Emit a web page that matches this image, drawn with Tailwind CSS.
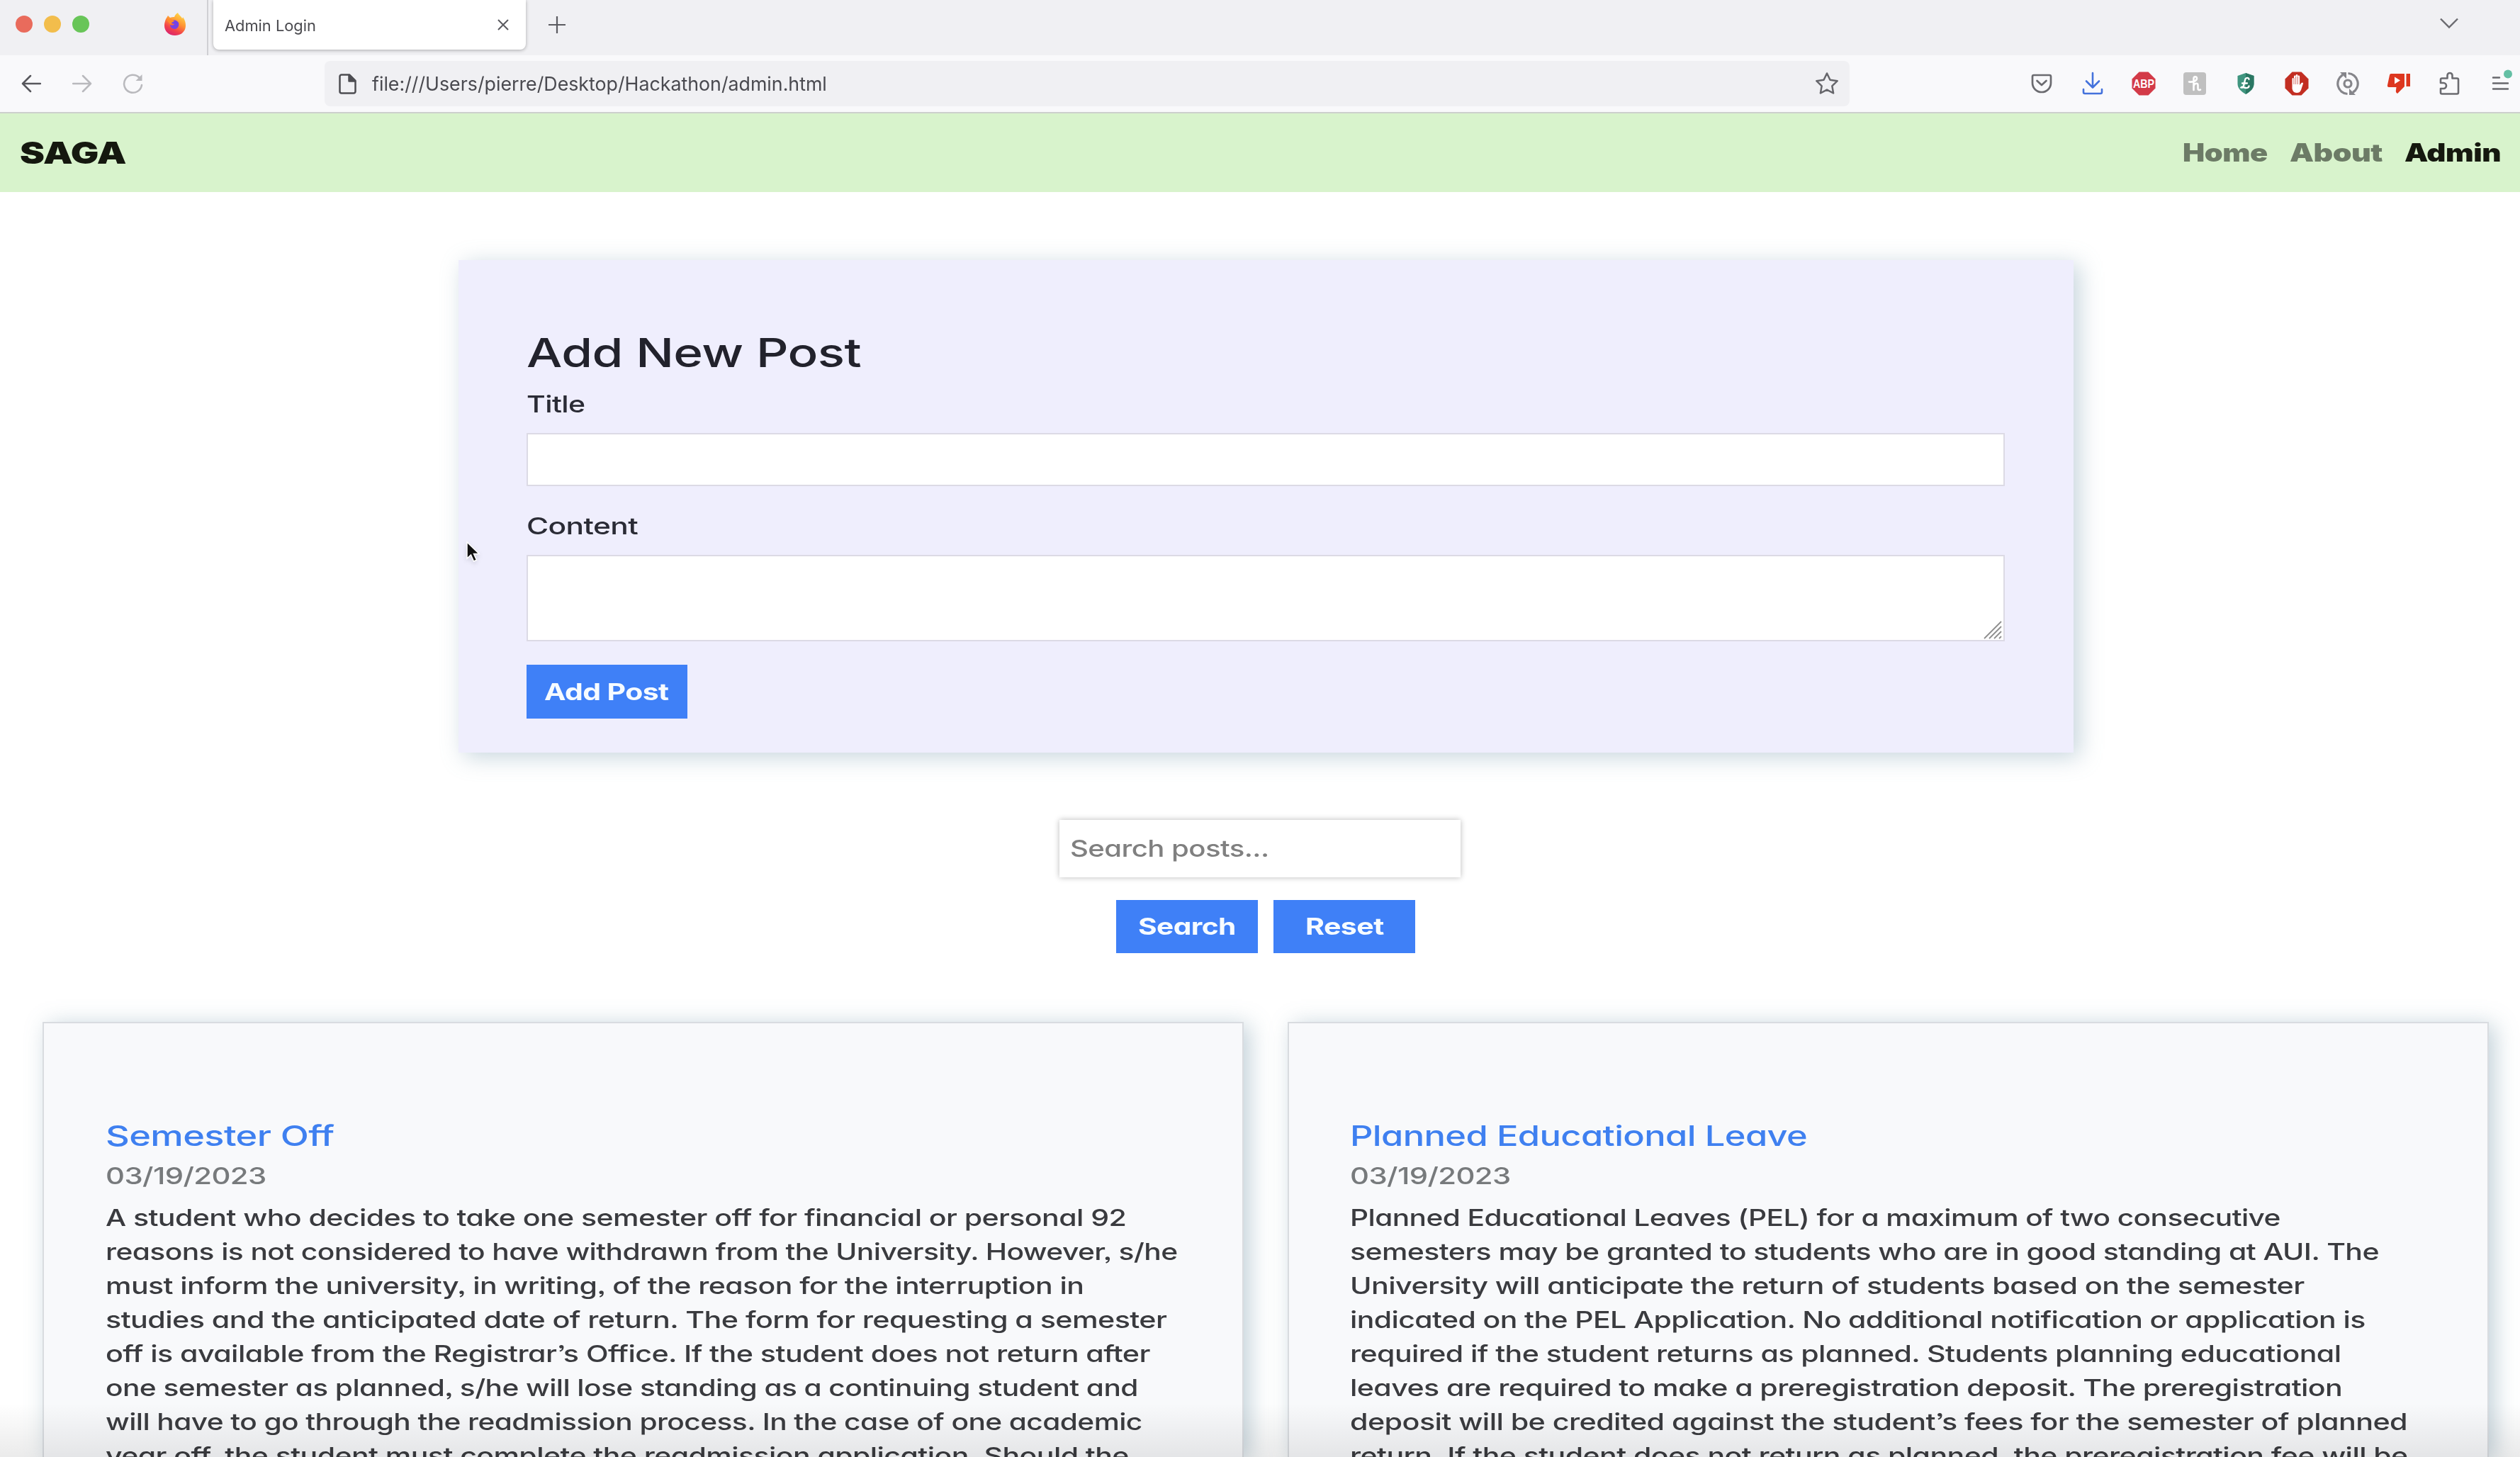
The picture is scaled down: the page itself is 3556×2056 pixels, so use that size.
<!DOCTYPE html>
<html lang="en">
<head>
  <meta charset="UTF-8">
  <meta name="viewport" content="width=device-width, initial-scale=1.0">
  <title>Admin Login</title>
  <script src="https://cdn.jsdelivr.net/npm/@tailwindcss/browser@4"></script>
</head>
<body class="relative h-[2056px] w-[3556px] overflow-hidden bg-white font-['Inter','Liberation_Sans',sans-serif]">

  <!-- Tab bar -->
  <div class="flex h-[78px] items-start bg-[#f0f0f3]">
    <div class="flex h-[68px] items-center gap-4 pl-[22px]">
      <span class="size-6 rounded-full bg-[#e96b5c]"></span>
      <span class="size-6 rounded-full bg-[#f2bd4c]"></span>
      <span class="size-6 rounded-full bg-[#68c558]"></span>
    </div>
    <svg class="mt-[18px] ml-[105px] size-8" viewBox="0 0 32 32">
      <defs>
        <linearGradient id="fox" x1="0.8" y1="0" x2="0.3" y2="1">
          <stop offset="0" stop-color="#ffe14a"/>
          <stop offset="0.45" stop-color="#ff9132"/>
          <stop offset="0.75" stop-color="#f2404b"/>
          <stop offset="1" stop-color="#d92470"/>
        </linearGradient>
      </defs>
      <path d="M3 9c1-2 2-3 3-5 1 1 2 2 3 3 2-1 4-1 6-1 1-3 3-5 5-6 1 3 5 5 6 8 1-1 1-1 1-2 3 4 4 8 4 12 0 8-6 14-15 14S1 26 1 18c0-4 1-6 2-9z" fill="url(#fox)"/>
      <path d="M11 11c4-2 8 0 10 3 1 3 0 8-5 9-4 0-7-3-7-6 2 1 5 1 6-1-2 0-4-1-5-3z" fill="#7543e5"/>
      <path d="M4 10c3-2 6-1 8 0l3 1c-1 2-3 2-4 3-1 1 0 2-1 3" fill="#ff8a2b"/>
    </svg>
    <div class="ml-[29px] h-[78px] w-[2px] bg-[#cfcfd3]"></div>
    <div class="ml-[7px] flex h-[70px] w-[441px] items-center justify-between rounded-b-lg bg-white pr-[24px] pl-[16px] shadow-[0_1px_5px_rgba(0,0,0,0.3)]">
      <span data-w="129" class="inline-block origin-left pt-[2px] text-[21.5px] leading-[70px] whitespace-nowrap text-[#4a4a4f]">Admin Login</span>
      <svg class="size-4" viewBox="0 0 16 16" fill="none" stroke="#5b5b60" stroke-width="2"><path d="M1 1l14 14M15 1L1 15"/></svg>
    </div>
    <svg class="mt-[23px] ml-[32px] size-6" viewBox="0 0 24 24" fill="none" stroke="#5b5b60" stroke-width="2.2"><path d="M12 0v24M0 12h24"/></svg>
    <svg class="mt-[25px] mr-[87px] ml-auto h-4 w-[26px]" viewBox="0 0 26 16" fill="none" stroke="#6a6a6f" stroke-width="2.4"><path d="M1 1.500l12 12 12-12"/></svg>
  </div>

  <!-- Toolbar -->
  <div class="flex h-[82px] items-center border-b-2 border-[#cdd0cd] bg-[#f9f9fb]">
    <svg class="ml-[30px] h-[26px] w-[28px]" viewBox="0 0 28 26" fill="none" stroke="#57575c" stroke-width="2.5" stroke-linecap="round" stroke-linejoin="round"><path d="M27 13H2M13 2L2 13l11 11"/></svg>
    <svg class="ml-[44px] h-[26px] w-[28px]" viewBox="0 0 28 26" fill="none" stroke="#b9b9bd" stroke-width="2.5" stroke-linecap="round" stroke-linejoin="round"><path d="M1 13h25M15 2l11 11-11 11"/></svg>
    <svg class="ml-[43px] size-[30px]" viewBox="0 0 30 30" fill="none" stroke="#b9b9bd" stroke-width="2.500" stroke-linecap="round"><path d="M27 17a12.500 12.500 0 1 1-3.500-10.500"/><path d="M27.500 2v9h-9z" fill="#b9b9bd" stroke="none"/></svg>
    <div class="ml-[255px] flex h-[64px] w-[2152px] shrink-0 items-center rounded-lg bg-[#f0f0f3] pr-[15px] pl-[20px]">
      <svg class="h-[29px] w-[25px]" viewBox="0 0 25 29" fill="none" stroke="#4d4d52" stroke-width="2.500" stroke-linejoin="round"><path d="M4 1.500h11l8.500 8.500v15a2.500 2.500 0 0 1-2.500 2.500H4A2.500 2.500 0 0 1 1.500 25V4A2.500 2.500 0 0 1 4 1.500z"/><path d="M14.500 2v8.500H23z" fill="#4d4d52"/></svg>
      <span data-w="642" class="ml-[22px] inline-block origin-left pt-[2px] text-[27px] leading-[62px] whitespace-nowrap text-[#4a4a50]">file:///Users/pierre/Desktop/Hackathon/admin.html</span>
      <svg class="ml-auto size-[34px]" viewBox="0 0 34 34" fill="none" stroke="#66666b" stroke-width="2.500" stroke-linejoin="round"><path d="M17 2.500l4.500 9.300 10.200 1.400-7.400 7.100 1.800 10.200-9.100-4.900-9.100 4.900 1.800-10.200-7.400-7.100 10.200-1.400z"/></svg>
    </div>

    <!-- Extension icons -->
    <div class="ml-[253px] flex shrink-0 gap-9">
      <svg class="size-9" viewBox="0 0 36 36" fill="none" stroke="#6b6b70" stroke-width="2.700" stroke-linecap="round" stroke-linejoin="round"><path d="M7 6h22a2 2 0 0 1 2 2v9a13 13 0 0 1-26 0V8a2 2 0 0 1 2-2z"/><path d="M11.500 14l6.500 6 6.500-6"/></svg>
      <svg class="size-9" viewBox="0 0 36 36" fill="none" stroke="#4472dc" stroke-width="2.600" stroke-linecap="round" stroke-linejoin="round"><path d="M18 3v20M9 14.500l9 9 9-9M5 26v4a2 2 0 0 0 2 2h22a2 2 0 0 0 2-2v-4"/></svg>
      <svg class="size-9" viewBox="0 0 36 36"><path d="M11.500 1.500h13l10 10v13l-10 10h-13l-10-10v-13z" fill="#d33b48"/><text x="18" y="24" text-anchor="middle" textLength="30" lengthAdjust="spacingAndGlyphs" font-family="Liberation Sans" font-weight="700" font-size="17" fill="#fff">ABP</text></svg>
      <svg class="size-9" viewBox="0 0 36 36" fill="none"><rect x="2" y="2" width="32" height="32" rx="4" fill="#c0c0c0"/><path d="M10 15.500c5 .5 11-1 11-5 0-3-4.500-3-4.500.5V27M16.500 21.500c1-4.500 6-5 6-1.500v5c0 2 1.500 2.500 3.500 1.500" stroke="#fff" stroke-width="2.600" stroke-linecap="round"/></svg>
      <svg class="size-9" viewBox="0 0 36 36" fill="none"><path d="M18 3l11.500 4v11c0 7-5 11-11.500 15C11.500 29 6.500 25 6.500 18V7z" fill="#3f957f"/><path d="M18 3l11.500 4v11c0 7-5 11-11.500 15z" fill="#2b7763"/><path d="M22.500 12c0-3-5-3-5.500 1l-2 8c-.5 2-2 3-3.500 2.500 2-2.500 5 1.500 8.500.5 1.500-.5 2.500-1.500 2.500-2.500M13 17.500h7" stroke="#fff" stroke-width="2.300" stroke-linecap="round"/></svg>
      <svg class="size-9" viewBox="0 0 36 36"><path d="M11.500 1.500h13l10 10v13l-10 10h-13l-10-10v-13z" fill="#c22e22"/><path d="M18 31c-4 0-6-3-6.500-6V11.500c0-2 2.500-2 2.500 0V8c0-2 2.700-2 2.700 0V6.500c0-2 2.700-2 2.700 0V8c0-2 2.700-2 2.700 0v12l2.500-3c1.300-1.300 3-.3 2.300 1.200L24 27c-1.500 3-3 4-6 4z" fill="#fff"/><path d="M14 10v9M16.700 8v11M19.400 8v11" stroke="#c22e22" stroke-width=".7"/></svg>
      <svg class="size-9" viewBox="0 0 36 36" fill="none" stroke="#85858a" stroke-width="3.200"><circle cx="18" cy="18" r="5"/><path d="M17.500 32.500A14.500 14.500 0 0 1 11 5.500M18.500 3.500A14.500 14.500 0 0 1 25 30.500"/><path d="M7 2h9v9zM29 34h-9v-9z" fill="#85858a" stroke="none"/></svg>
      <svg class="size-9" viewBox="0 0 36 36"><path d="M7 4h19v18l-10 10c-2-1-2.500-3-2-5l.5-4H4c-1.500 0-2.500-1-2-3L5 6c.3-1.300 1-2 2-2zM28.500 4H34v18h-5.500z" fill="#dd371f"/><path d="M12 8.500l8 5-8 5z" fill="#fff"/></svg>
      <svg class="size-9" viewBox="0 0 36 36" fill="none" stroke="#6b6b70" stroke-width="2.600" stroke-linejoin="round"><path d="M7 32.500a2 2 0 0 1-2-2V25h4a3.500 3.500 0 0 0 0-8H5v-4.500a2 2 0 0 1 2-2h7.500V6.500a3.500 3.500 0 0 1 7 0v4H28a2 2 0 0 1 2 2v18a2 2 0 0 1-2 2z"/></svg>
      <svg class="size-9 overflow-visible" viewBox="0 0 36 36" fill="none" stroke="#68686d" stroke-width="2.400" stroke-linecap="round"><path d="M7 9.500h9M7 17.500h21M7 25.500h21"/><circle cx="28" cy="4.500" r="6" fill="#64bfa4" stroke="none"/></svg>
    </div>
  </div>

  <!-- Site nav -->
  <nav class="flex h-[111px] items-center justify-between bg-[#d8f3cc] pr-[27px] pl-[28px] leading-[111px] font-black tracking-tight whitespace-nowrap text-[#15180f]">
    <span data-w="150" class="inline-block origin-left text-[42px]">SAGA</span>
    <div class="flex gap-[31px] text-[35px]">
      <a data-w="120" class="inline-block origin-left text-[#6c7b66]">Home</a>
      <a data-w="131" class="inline-block origin-left text-[#6c7b66]">About</a>
      <a data-w="136" class="inline-block origin-left">Admin</a>
    </div>
  </nav>

  <main class="tracking-[-0.03em] [font-feature-settings:'cv11','ss03']">
    <!-- New post form -->
    <section class="mt-[96px] ml-[647px] h-[695px] w-[2279px] bg-[#efeefd] px-[96px] pt-[97px] leading-[48px] whitespace-nowrap text-[#2a2b35] shadow-[8px_6px_30px_rgba(120,155,175,0.42)]">
      <h1 class="text-[56px] leading-[68px] font-medium text-[#22222c]"><span data-w="472" class="inline-block origin-left">Add New Post</span></h1>
      <div class="mt-[14px] text-[33px] font-medium"><span data-w="82" class="inline-block origin-left">Title</span></div>
      <div class="mt-[17px] h-[75px] w-[2086px] border-2 border-[#dcdae5] bg-white"></div>
      <div class="mt-[32px] text-[33px] font-medium"><span data-w="157" class="inline-block origin-left">Content</span></div>
      <div class="mt-[17px] flex h-[122px] w-[2086px] items-end justify-end border-2 border-[#dcdae5] bg-white">
        <svg class="mr-[2px] mb-px size-[26px]" viewBox="0 0 26 26" fill="none" stroke="#8e8e8e" stroke-width="1.800"><path d="M1 25L25 1M8 25L25 8M15 25l10-10M22 25l3-3"/></svg>
      </div>
      <div class="mt-[33px] flex h-[76px] w-[227px] items-center bg-[#3f80f7] pl-[25px] text-[33px] font-bold text-[#f6fbff]"><span data-w="175" class="inline-block origin-left">Add Post</span></div>
    </section>

    <!-- Search -->
    <section class="mt-[95px] leading-[81px] whitespace-nowrap">
      <div class="ml-[1495px] h-[81px] w-[566px] bg-white pl-[15px] text-[33px] font-medium text-[#808080] shadow-[0_0_8px_rgba(0,0,0,0.28)]"><span data-w="281" class="inline-block origin-left">Search posts...</span></div>
      <div class="mt-[32px] ml-[1575px] flex gap-[22px] text-[33px] leading-[75px] font-bold text-[#f6fbff]">
        <div class="flex h-[75px] w-[200px] justify-center bg-[#3f80f7]"><span data-w="138" class="inline-block origin-left">Search</span></div>
        <div class="flex h-[75px] w-[200px] justify-center bg-[#3f80f7]"><span data-w="111" class="inline-block origin-left">Reset</span></div>
      </div>
    </section>

    <!-- Posts -->
    <section class="mt-[97px] flex gap-[62px] pl-[60px] text-[33px] leading-[48px] font-medium whitespace-nowrap text-[#3a3b3f]">
      <article class="h-[614px] w-[1695px] overflow-hidden border-2 border-b-0 border-[#d9dce0] bg-[#f8f9fb] pt-[129px] pl-[87px] shadow-[8px_4px_30px_rgba(110,145,165,0.42)]">
        <h2 class="text-[40px] leading-[60px] font-medium text-[#3f80f0]"><span data-w="322" class="inline-block origin-left">Semester Off</span></h2>
        <div class="mt-[2px] text-[#777a7c]"><span data-w="227" class="inline-block origin-left">03/19/2023</span></div>
        <div class="mt-[11px] flex flex-col items-start">
          <span data-w="1440" class="origin-left">A student who decides to take one semester off for financial or personal 92</span>
          <span data-w="1513" class="origin-left">reasons is not considered to have withdrawn from the University. However, s/he</span>
          <span data-w="1380" class="origin-left">must inform the university, in writing, of the reason for the interruption in</span>
          <span data-w="1498" class="origin-left">studies and the anticipated date of return. The form for requesting a semester</span>
          <span data-w="1474" class="origin-left">off is available from the Registrar’s Office. If the student does not return after</span>
          <span data-w="1457" class="origin-left">one semester as planned, s/he will lose standing as a continuing student and</span>
          <span data-w="1463" class="origin-left">will have to go through the readmission process. In the case of one academic</span>
          <span data-w="1444" class="origin-left">year off, the student must complete the readmission application. Should the</span>
        </div>
      </article>
      <article class="h-[614px] w-[1695px] overflow-hidden border-2 border-b-0 border-[#d9dce0] bg-[#f8f9fb] pt-[129px] pl-[86px] shadow-[8px_4px_30px_rgba(110,145,165,0.42)]">
        <h2 class="text-[40px] leading-[60px] font-medium text-[#3f80f0]"><span data-w="645" class="inline-block origin-left">Planned Educational Leave</span></h2>
        <div class="mt-[2px] text-[#777a7c]"><span data-w="227" class="inline-block origin-left">03/19/2023</span></div>
        <div class="mt-[11px] flex flex-col items-start">
          <span data-w="1313" class="origin-left">Planned Educational Leaves (PEL) for a maximum of two consecutive</span>
          <span data-w="1452" class="origin-left">semesters may be granted to students who are in good standing at AUI. The</span>
          <span data-w="1347" class="origin-left">University will anticipate the return of students based on the semester</span>
          <span data-w="1433" class="origin-left">indicated on the PEL Application. No additional notification or application is</span>
          <span data-w="1398" class="origin-left">required if the student returns as planned. Students planning educational</span>
          <span data-w="1400" class="origin-left">leaves are required to make a preregistration deposit. The preregistration</span>
          <span data-w="1492" class="origin-left">deposit will be credited against the student’s fees for the semester of planned</span>
          <span data-w="1493" class="origin-left">return. If the student does not return as planned, the preregistration fee will be</span>
        </div>
      </article>
    </section>
  </main>

  <!-- Fade along the bottom edge -->
  <div class="absolute inset-x-0 bottom-0 h-[76px] bg-gradient-to-b from-black/0 to-black/8"></div>

  <!-- Mouse pointer -->
  <svg class="absolute top-[762px] left-[656px] h-[34px] w-[24px] drop-shadow-md" viewBox="0 0 24 34"><path d="M3 3v23l5.500-5 4 9 4-1.700-4-8.800H20z" fill="#111" stroke="#fff" stroke-width="1.500"/></svg>

  <script>
    function fit(el) {
      const natural = el.offsetWidth;
      const wanted = Number(el.dataset.w);
      el.style.transform = `scaleX(${wanted / natural})`;
      el.style.marginRight = `${wanted - natural}px`;
    }

    // styles and fonts may land after this runs, so follow size changes
    const observer = new ResizeObserver(entries => entries.forEach(e => fit(e.target)));
    document.querySelectorAll('[data-w]').forEach(el => observer.observe(el));
    window.addEventListener('load', () => document.querySelectorAll('[data-w]').forEach(fit));
  </script>
</body>
</html>
